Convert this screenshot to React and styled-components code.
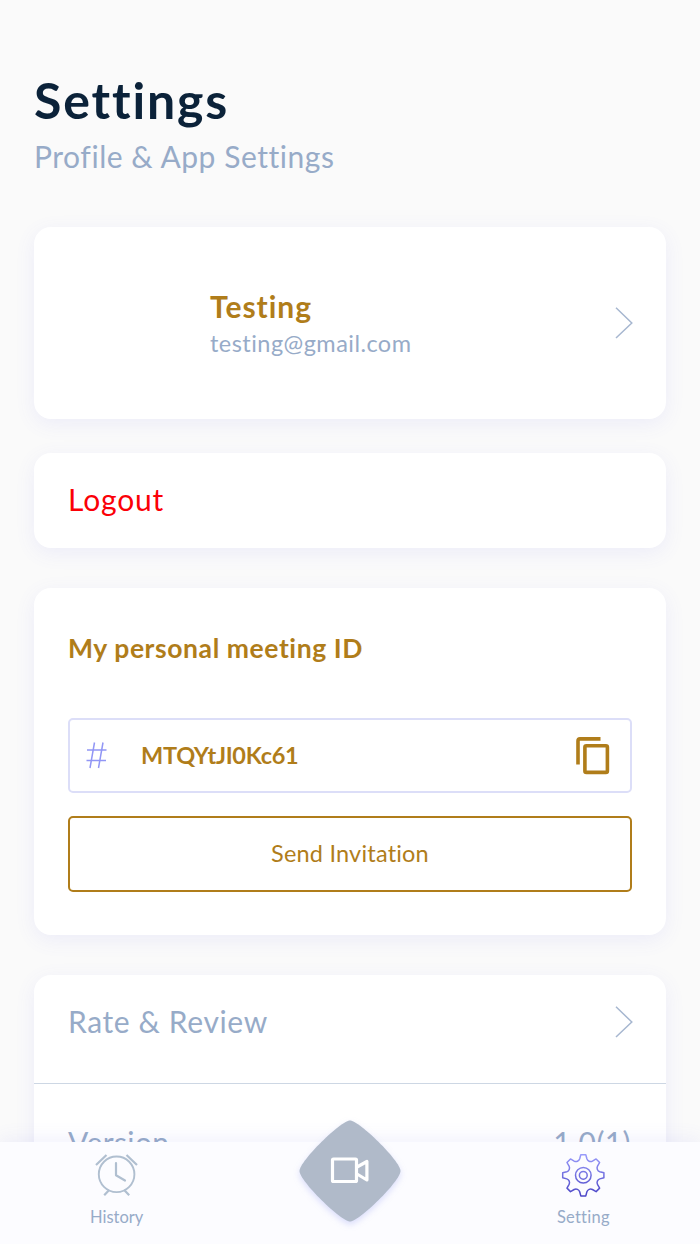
import styled, { createGlobalStyle, ThemeProvider, css } from 'styled-components';

const theme = {
  colors: {
    surface: '#ffffff',
    nav: '#fcfcff',
    title: '#0b2239',
    muted: '#97abc8',
    gold: '#b07d1a',
    danger: '#fb0007',
    outline: '#dcdef8',
    divider: '#cdd7e4',
  },
  shadow: '0 5px 20px rgba(96, 96, 232, 0.09)',
};

const GlobalStyle = createGlobalStyle`
  * {
    box-sizing: border-box;
  }

  body {
    margin: 0;
    overflow: hidden;
    background: #fafafa;
    font-family: Lato, "Open Sans", sans-serif;
  }
`;

const Screen = styled.div`
  height: 1244px;
  overflow: hidden;
  display: flex;
  flex-direction: column;
`;

const Content = styled.main`
  flex: 1;
  min-height: 0;
  padding: 0 34px;
`;

const Header = styled.header`
  height: 227px;
  padding-top: 70px;
`;

const Text = styled.span(
  ({ theme: { colors }, $color = 'muted', $size, $line, $weight = 400, $spacing = 0 }) => css`
    display: block;
    color: ${colors[$color]};
    font-size: ${$size}px;
    line-height: ${$line}px;
    font-weight: ${$weight};
    letter-spacing: ${$spacing}px;
    font-variant-ligatures: none;
    white-space: nowrap;
  `
);

const Title = styled(Text)`
  margin: 0 0 8px;
`;

const Card = styled.section(
  ({ theme: { colors, shadow }, $height, $gap = 0 }) => css`
    height: ${$height}px;
    margin-bottom: ${$gap}px;
    border-radius: 17px;
    background: ${colors.surface};
    box-shadow: ${shadow};
  `
);

const ProfileCard = styled(Card)`
  display: flex;
  align-items: center;
  padding: 0 33px 0 34px;
`;

const Avatar = styled.div`
  width: 108px;
  height: 108px;
  margin-right: 34px;
`;

const ProfileInfo = styled.div`
  flex: 1;
  display: grid;
  gap: 5px;
  padding-bottom: 2px;
`;

const LogoutCard = styled(Card)`
  padding: 28px 34px;
`;

const MeetingCard = styled(Card)`
  padding: 42px 34px 0;
`;

const MeetingField = styled.div`
  display: flex;
  align-items: center;
  height: 75px;
  margin: 52px 0 23px;
  padding: 0 20px 0 16px;
  border: 2px solid ${({ theme }) => theme.colors.outline};
  border-radius: 5px;
`;

const MeetingCode = styled(Text)`
  flex: 1;
  margin-left: 34px;
  padding-bottom: 2px;
`;

const InviteButton = styled.button`
  display: flex;
  align-items: center;
  justify-content: center;
  width: 100%;
  height: 76px;
  padding: 0 0 3px;
  border: 2px solid ${({ theme }) => theme.colors.gold};
  border-radius: 5px;
  background: transparent;
  font-family: inherit;
`;

const Row = styled.div`
  display: flex;
  justify-content: space-between;
  align-items: flex-start;
  height: ${({ $height }) => $height}px;
  padding: ${({ $top }) => $top}px ${({ $right = 33 }) => $right}px 0 34px;
  border-bottom: ${({ theme, $divided }) => ($divided ? `1px solid ${theme.colors.divider}` : 'none')};
`;

const Chevron = styled.svg`
  display: block;
  width: 18px;
  height: 32px;
  fill: none;
  stroke: #a7b7d0;
  stroke-width: 1.5;
`;

const Nav = styled.nav`
  position: relative;
  display: grid;
  grid-template-columns: repeat(3, 1fr);
  height: 102px;
  background: ${({ theme }) => theme.colors.nav};
  box-shadow: 0 -3px 18px rgba(96, 96, 232, 0.09);
`;

const NavItem = styled.a`
  display: flex;
  flex-direction: column;
  align-items: center;
  gap: 8px;
  padding-top: 10px;
`;

const NavIcon = styled.svg`
  width: 46px;
  height: 46px;
  fill: none;
`;

const MeetButton = styled.a`
  display: flex;
  justify-content: center;
  margin-top: -22px;

  svg {
    width: 102px;
    height: 102px;
    overflow: visible;
    filter: drop-shadow(0 3px 3px rgba(120, 130, 240, 0.25));
  }
`;

const ChevronIcon = () => (
  <Chevron viewBox="0 0 18 32">
    <path d="M1 .8l15.800 15.200L1 31" />
  </Chevron>
);

const HashIcon = () => (
  <svg width="21" height="27" viewBox="0 0 21 27" fill="none" stroke="#9196f5" strokeWidth="1.5">
    <path d="M8.500 .5L4 26M17 .5L12.500 26M1 8h19.500M.5 18.500h19.500" />
  </svg>
);

const CopyIcon = () => (
  <svg width="34" height="38" viewBox="0 0 34 38" fill="none" stroke="#b07d1a" strokeWidth="3.6">
    <path d="M24.500 1.900H4Q2 1.900 2 3.900V27.500" />
    <rect x="8.900" y="8.700" width="22.500" height="26.700" rx="1.500" />
  </svg>
);

const ClockIcon = () => (
  <NavIcon viewBox="0 0 46 46" stroke="#b0bfd0" strokeWidth="1.9">
    <circle cx="22.600" cy="22.300" r="17.800" />
    <path d="M22 11v12.200l9 5.300" strokeWidth="2.2" strokeLinecap="round" strokeLinejoin="round" />
    <path d="M2 13L12.500 3M32.500 3L43 13M15.200 38l-5 5.300M30.200 38l5 5.300" strokeWidth="2.2" />
  </NavIcon>
);

const gearPath = () => {
  const point = (x, y, turn) => {
    const a = (turn * Math.PI) / 4;
    const px = x * Math.cos(a) - y * Math.sin(a);
    const py = x * Math.sin(a) + y * Math.cos(a);
    return `${(px + 23.3).toFixed(2)} ${(py + 23.3).toFixed(2)}`;
  };
  let d = '';
  for (let i = 0; i < 8; i++) {
    d += `${i ? 'L' : 'M'}${point(-2.5, -20.6, i)}L${point(2.5, -20.6, i)}`;
    d += `L${point(3.6, -16.5, i)}A3.9 3.9 0 0 0 ${point(-3.6, -16.5, i + 1)}`;
  }
  return `${d}Z`;
};

const GearIcon = () => (
  <NavIcon viewBox="0 0 46 46" stroke="url(#gear)" strokeWidth="1.5">
    <defs>
      <linearGradient id="gear" gradientUnits="userSpaceOnUse" x1="0" y1="2" x2="0" y2="44">
        <stop offset="0" stopColor="#9a9cfb" />
        <stop offset="1" stopColor="#4b45c6" />
      </linearGradient>
    </defs>
    <path d={gearPath()} strokeLinejoin="round" />
    <circle cx="23.300" cy="23.300" r="7.800" />
    <circle cx="23.300" cy="23.300" r="3.900" />
  </NavIcon>
);

const MeetIcon = () => (
  <svg viewBox="0 0 102 102">
    <path
      d="M51 .5C60 .5 101.500 41 101.500 51S60 101.500 51 101.500 .5 61 .5 51 42 .5 51 .5Z"
      fill="#b0bac9"
    />
    <g fill="none" stroke="#fff" strokeWidth="3.2" strokeLinejoin="round">
      <rect x="33.500" y="39" width="24" height="22.500" rx="1" />
      <path d="M58 47l9.900-5.500v18.500L58 54" />
    </g>
  </svg>
);

export default function App() {
  return (
    <ThemeProvider theme={theme}>
      <GlobalStyle />
      <Screen>
        <Content>
          <Header>
            <Title as="h1" $color="title" $size={50} $line={60} $weight={700} $spacing={1.85}>Settings</Title>
            <Text $size={30} $line={36} $spacing={0.54}>Profile &amp; App Settings</Text>
          </Header>

          <ProfileCard $height={192} $gap={34}>
            <Avatar />
            <ProfileInfo>
              <Text $color="gold" $size={30} $line={36} $weight={700} $spacing={1}>Testing</Text>
              <Text $size={23.5} $line={28} $spacing={0.46}>testing@gmail.com</Text>
            </ProfileInfo>
            <ChevronIcon />
          </ProfileCard>

          <LogoutCard $height={94.5} $gap={40.5}>
            <Text $color="danger" $size={30} $line={36} $spacing={0.85}>Logout</Text>
          </LogoutCard>

          <MeetingCard $height={347} $gap={40}>
            <Text $color="gold" $size={26.5} $line={36} $weight={700} $spacing={0.58}>My personal meeting ID</Text>
            <MeetingField>
              <HashIcon />
              <MeetingCode $color="gold" $size={23.5} $line={28} $weight={700} $spacing={-0.3}>MTQYtJI0Kc61</MeetingCode>
              <CopyIcon />
            </MeetingField>
            <InviteButton>
              <Text $color="gold" $size={23.5} $line={28} $spacing={0.2}>Send Invitation</Text>
            </InviteButton>
          </MeetingCard>

          <Card $height={230}>
            <Row $height={109} $top={31} $divided>
              <Text $size={30} $line={30} $spacing={0.62}>Rate &amp; Review</Text>
              <ChevronIcon />
            </Row>
            <Row $height={110} $top={40} $right={35}>
              <Text $size={30} $line={36} $spacing={0.4}>Version</Text>
              <Text $size={30} $line={36} $spacing={0.4}>1.0(1)</Text>
            </Row>
          </Card>
        </Content>

        <Nav>
          <NavItem>
            <ClockIcon />
            <Text $size={16.5} $line={22}>History</Text>
          </NavItem>
          <MeetButton>
            <MeetIcon />
          </MeetButton>
          <NavItem>
            <GearIcon />
            <Text $size={16.5} $line={22} $spacing={0.25}>Setting</Text>
          </NavItem>
        </Nav>
      </Screen>
    </ThemeProvider>
  );
}
